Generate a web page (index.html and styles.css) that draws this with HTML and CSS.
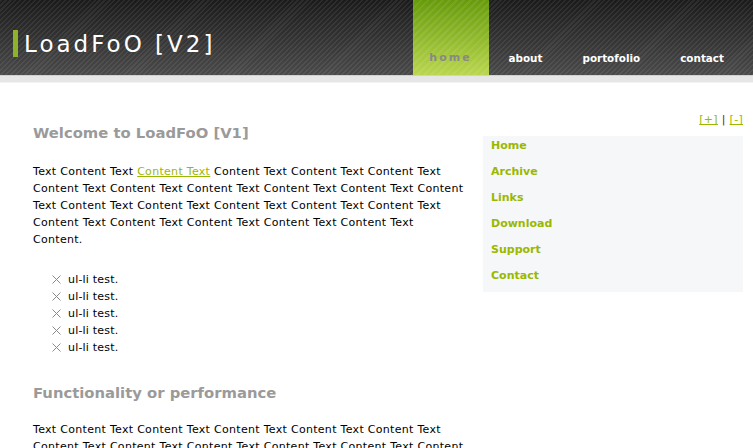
FILE: index.html
```html
<!DOCTYPE html>
<html>
<head>
<meta charset="utf-8">
<link rel="stylesheet" href="styles.css">
</head>
<body>
<div class="header">
  <div class="logo"><span class="logo-bar"></span><span class="logo-text">LoadFoO [V2]</span></div>
  <ul class="nav">
    <li class="nav-item active"><a href="#">home</a></li>
    <li class="nav-item"><a href="#">about</a></li>
    <li class="nav-item"><a href="#">portofolio</a></li>
    <li class="nav-item"><a href="#">contact</a></li>
  </ul>
</div>
<div class="band"></div>
<div class="page">
  <div class="main">
    <h2 class="title">Welcome to LoadFoO [V1]</h2>
    <p class="text">Text Content Text <a href="#">Content Text</a> Content Text Content Text Content Text Content Text Content Text Content Text Content Text Content Text Content Text Content Text Content Text Content Text Content Text Content Text Content Text Content Text Content Text Content Text Content Text Content.</p>
    <ul class="list">
      <li><svg class="x" width="9" height="9" viewBox="0 0 9 9"><path d="M0.5 0.5L8.5 8.5M8.5 0.5L0.5 8.5" stroke="#8a8a8a" stroke-width="1"/></svg>ul-li test.</li>
      <li><svg class="x" width="9" height="9" viewBox="0 0 9 9"><path d="M0.5 0.5L8.5 8.5M8.5 0.5L0.5 8.5" stroke="#8a8a8a" stroke-width="1"/></svg>ul-li test.</li>
      <li><svg class="x" width="9" height="9" viewBox="0 0 9 9"><path d="M0.5 0.5L8.5 8.5M8.5 0.5L0.5 8.5" stroke="#8a8a8a" stroke-width="1"/></svg>ul-li test.</li>
      <li><svg class="x" width="9" height="9" viewBox="0 0 9 9"><path d="M0.5 0.5L8.5 8.5M8.5 0.5L0.5 8.5" stroke="#8a8a8a" stroke-width="1"/></svg>ul-li test.</li>
      <li><svg class="x" width="9" height="9" viewBox="0 0 9 9"><path d="M0.5 0.5L8.5 8.5M8.5 0.5L0.5 8.5" stroke="#8a8a8a" stroke-width="1"/></svg>ul-li test.</li>
    </ul>
    <h2 class="title title2">Functionality or performance</h2>
    <p class="text text2">Text Content Text Content Text Content Text Content Text Content Text Content Text Content Text Content Text Content Text Content Text Content Text Content Text Content Text Content Text Content Text Content Text Content Text Content Text Content Text Content Text Content.</p>
  </div>
  <div class="side">
    <div class="sizer"><a href="#">[+]</a> <span class="sep">|</span> <a href="#">[-]</a></div>
    <ul class="menu">
      <li><a href="#">Home</a></li>
      <li><a href="#">Archive</a></li>
      <li><a href="#">Links</a></li>
      <li><a href="#">Download</a></li>
      <li><a href="#">Support</a></li>
      <li><a href="#">Contact</a></li>
    </ul>
  </div>
</div>
</body>
</html>
```

FILE: styles.css
```css
html, body {
  margin: 0;
  padding: 0;
  background: #fff;
}
body {
  font-family: Verdana, "DejaVu Sans", sans-serif;
  font-size: 11px;
  color: #000;
}
.header {
  height: 75px;
  display: flex;
  justify-content: space-between;
  background:
    repeating-linear-gradient(135deg, rgba(255,255,255,0.07) 0 1.5px, rgba(0,0,0,0) 1.5px 3.5px),
    linear-gradient(#1b1b1b, #4a4a4a);
}
.logo {
  display: flex;
  align-items: center;
  padding-left: 13px;
  padding-top: 12px;
}
.logo-bar {
  width: 5px;
  height: 27px;
  background: #8db32a;
  margin-right: 6px;
}
.logo-text {
  color: #fff;
  font-size: 23px;
  letter-spacing: 3px;
}
.nav {
  list-style: none;
  margin: 0;
  padding: 0 9px 0 0;
  display: flex;
}
.nav-item {
  display: flex;
}
.nav-item a {
  display: flex;
  align-items: flex-end;
  padding: 0 20px 11px;
  color: #fff;
  font-weight: bold;
  font-size: 10.4px;
  text-decoration: none;
}
.nav-item.active a {
  width: 76px;
  box-sizing: border-box;
  justify-content: center;
  padding: 0 0 11px;
  color: #888;
  letter-spacing: 2px;
  font-size: 11px;
  background:
    repeating-linear-gradient(135deg, rgba(255,255,255,0.08) 0 2px, rgba(0,0,0,0) 2px 5px),
    linear-gradient(#679b0c, #b9d64e);
}
.band {
  height: 6px;
  background: #e6e6e6;
  border-top: 1px solid #d0d0d0;
  border-bottom: 1px solid #f2f2f2;
}
.page {
  display: flex;
  padding: 30px 10px 0 33px;
  gap: 18px;
}
.main {
  width: 432px;
}
.title {
  margin: 10px 0 0;
  font-size: 14.8px;
  font-weight: bold;
  color: #9a9a9a;
  line-height: 20px;
}
.title2 {
  margin-top: 27px;
}
.text {
  margin: 20px 0 0;
  line-height: 17px;
  letter-spacing: 0.3px;
}
.text2 {
  margin-top: 18px;
}
.text a {
  color: #9ab800;
}
.list {
  list-style: none;
  margin: 23px 0 0;
  padding: 0 0 0 19px;
  letter-spacing: 0.2px;
}
.list li {
  line-height: 17px;
  display: flex;
  align-items: center;
}
.x {
  margin-right: 7px;
}
.side {
  width: 260px;
}
.sizer {
  text-align: right;
  line-height: 14px;
  height: 14px;
  letter-spacing: 0.3px;
}
.sizer a {
  color: #9ab800;
}
.sep {
  color: #6b2020;
}
.menu {
  list-style: none;
  margin: 9px 0 0;
  padding: 0;
  background: #f6f7f9;
}
.menu li a {
  display: block;
  padding: 1px 8px 7px;
  line-height: 18px;
  font-weight: bold;
  color: #9ab800;
  text-decoration: none;
}
```
